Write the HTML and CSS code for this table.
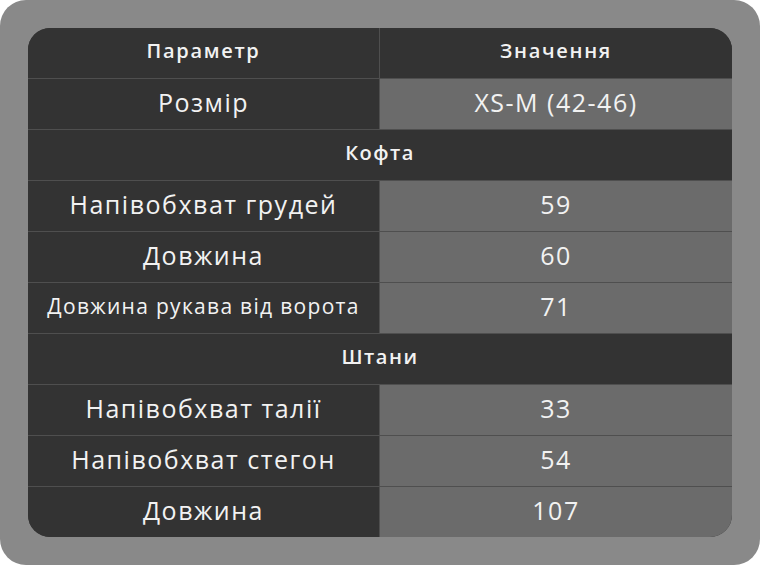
FILE: index.html
```html
<!DOCTYPE html>
<html lang="uk">
<head>
<meta charset="utf-8">
<link rel="stylesheet" href="styles.css">
</head>
<body>
<div class="frame">
  <div class="table">
    <div class="row head"><div class="cell">Параметр</div><div class="cell">Значення</div></div>
    <div class="row"><div class="cell">Розмір</div><div class="cell val">XS-M (42-46)</div></div>
    <div class="row section"><div class="cell">Кофта</div></div>
    <div class="row"><div class="cell">Напівобхват грудей</div><div class="cell val">59</div></div>
    <div class="row"><div class="cell">Довжина</div><div class="cell val">60</div></div>
    <div class="row"><div class="cell small">Довжина рукава від ворота</div><div class="cell val">71</div></div>
    <div class="row section"><div class="cell">Штани</div></div>
    <div class="row"><div class="cell">Напівобхват талії</div><div class="cell val">33</div></div>
    <div class="row"><div class="cell">Напівобхват стегон</div><div class="cell val">54</div></div>
    <div class="row last"><div class="cell">Довжина</div><div class="cell val">107</div></div>
  </div>
</div>
</body>
</html>
```

FILE: styles.css
```css
html, body {
  margin: 0;
  padding: 0;
  background: #ffffff;
}
.frame {
  width: 760px;
  height: 565px;
  box-sizing: border-box;
  padding: 28px;
  background: #898989;
  border-radius: 26px;
}
.table {
  width: 704px;
  height: 509px;
  border-radius: 22px;
  overflow: hidden;
  background: #333333;
  display: flex;
  flex-direction: column;
  font-family: "Open Sans", "DejaVu Sans", sans-serif;
  color: #f2f2f2;
}
.row {
  display: grid;
  grid-template-columns: 352px 352px;
  height: 51px;
  box-sizing: border-box;
  border-bottom: 1px solid rgba(255,255,255,0.14);
}
.row.last {
  border-bottom: none;
  height: 50px;
}
.cell {
  display: flex;
  align-items: center;
  justify-content: center;
  font-size: 25px;
  letter-spacing: 1.5px;
  background: #333333;
  border-right: 1px solid rgba(255,255,255,0.14);
  padding-bottom: 5px;
  box-sizing: border-box;
}
.cell + .cell {
  border-right: none;
}
.cell.val {
  background: #6b6b6b;
}
.cell.small {
  font-size: 21px;
  letter-spacing: 1.3px;
}
.row.head .cell {
  font-size: 20px;
  font-weight: 600;
  letter-spacing: 1.7px;
}
.row.section {
  grid-template-columns: 1fr;
}
.row.section .cell {
  font-size: 20px;
  font-weight: 600;
  letter-spacing: 1.5px;
  border-right: none;
}
```
